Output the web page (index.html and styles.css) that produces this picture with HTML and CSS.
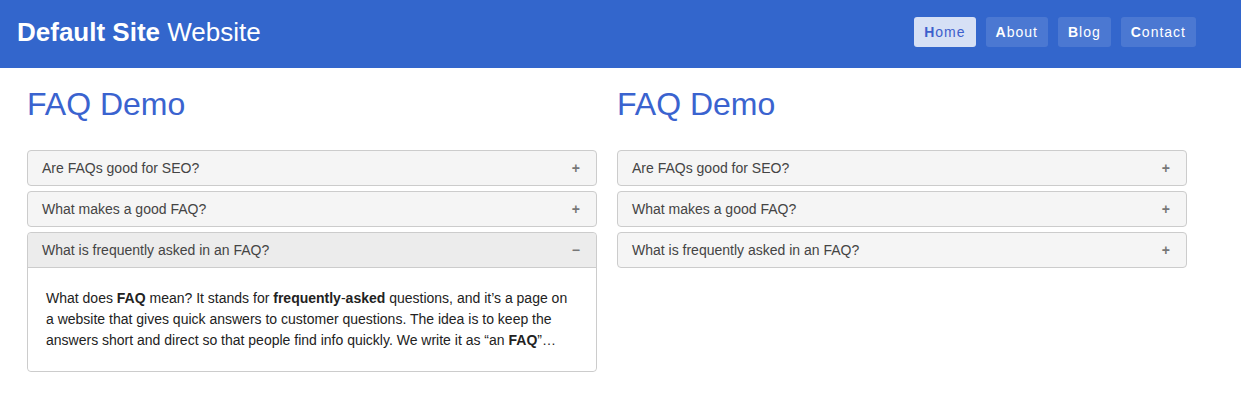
FILE: index.html
```html
<!DOCTYPE html>
<html lang="en">
<head>
    <meta charset="UTF-8">
    <meta name="viewport" content="width=device-width, initial-scale=1.0">
    <title>Default Site Website - FAQ Demo</title>
    <link rel="stylesheet" href="styles.css">
</head>
<body>
    <header class="site-header">
        <div class="site-title"><strong>Default Site</strong> Website</div>
        <nav class="site-nav">
            <a href="#" class="nav-link active">Home</a>
            <a href="#" class="nav-link">About</a>
            <a href="#" class="nav-link">Blog</a>
            <a href="#" class="nav-link">Contact</a>
        </nav>
    </header>

    <main class="columns">
        <section class="faq">
            <h1>FAQ Demo</h1>
            <div class="faq-item">
                <div class="faq-question"><span>Are FAQs good for SEO?</span><span class="sign">+</span></div>
            </div>
            <div class="faq-item">
                <div class="faq-question"><span>What makes a good FAQ?</span><span class="sign">+</span></div>
            </div>
            <div class="faq-item open">
                <div class="faq-question"><span>What is frequently asked in an FAQ?</span><span class="sign">&minus;</span></div>
                <div class="faq-answer">
                    <p>What does <b>FAQ</b> mean? It stands for <b>frequently</b>-<b>asked</b> questions, and it’s a page on a website that gives quick answers to customer questions. The idea is to keep the answers short and direct so that people find info quickly. We write it as “an <b>FAQ</b>”…</p>
                </div>
            </div>
        </section>

        <section class="faq">
            <h1>FAQ Demo</h1>
            <div class="faq-item">
                <div class="faq-question"><span>Are FAQs good for SEO?</span><span class="sign">+</span></div>
            </div>
            <div class="faq-item">
                <div class="faq-question"><span>What makes a good FAQ?</span><span class="sign">+</span></div>
            </div>
            <div class="faq-item">
                <div class="faq-question"><span>What is frequently asked in an FAQ?</span><span class="sign">+</span></div>
            </div>
        </section>
    </main>
</body>
</html>
```

FILE: styles.css
```css
body {
    margin: 0;
    font-family: "Liberation Sans", Arial, sans-serif;
    color: #333;
    background: #fff;
}
.site-header {
    display: flex;
    align-items: center;
    justify-content: space-between;
    height: 68px;
    box-sizing: border-box;
    padding: 0 45px 4px 17px;
    background-color: #3366cc;
    color: #fff;
}
.site-title {
    font-size: 26px;
    line-height: 30px;
}
.site-nav {
    display: flex;
    gap: 10px;
}
.nav-link {
    display: block;
    height: 30px;
    line-height: 30px;
    padding: 0 10px;
    border-radius: 3px;
    font-size: 14px;
    letter-spacing: 1px;
    color: #fff;
    text-decoration: none;
    background-color: rgba(255,255,255,0.12);
}
.nav-link::first-letter {
    font-weight: bold;
}
.nav-link.active {
    background-color: #d6e0f5;
    color: #3d5fcc;
}
.columns {
    display: grid;
    grid-template-columns: 570px 570px;
    gap: 20px;
    padding: 0 27px;
}
.faq h1 {
    margin: 18px 0 27px;
    font-size: 32px;
    line-height: 37px;
    font-weight: normal;
    color: #3a63cf;
}
.faq-item {
    border: 1px solid #ccc;
    border-radius: 4px;
    background-color: #f5f5f5;
    margin-bottom: 5px;
}
.faq-question {
    display: flex;
    justify-content: space-between;
    align-items: center;
    height: 34px;
    padding: 0 16px 0 14px;
    font-size: 14px;
    color: #444;
}
.sign {
    font-weight: bold;
    color: #777;
}
.faq-item.open .faq-question {
    background-color: #ececec;
    border-bottom: 1px solid #ccc;
    border-radius: 4px 4px 0 0;
}
.faq-answer {
    background: #fff;
    padding: 20px 18px;
    border-radius: 0 0 4px 4px;
}
.faq-answer p {
    margin: 0;
    max-width: 526px;
    font-size: 14px;
    line-height: 21px;
    color: #222;
}
```
